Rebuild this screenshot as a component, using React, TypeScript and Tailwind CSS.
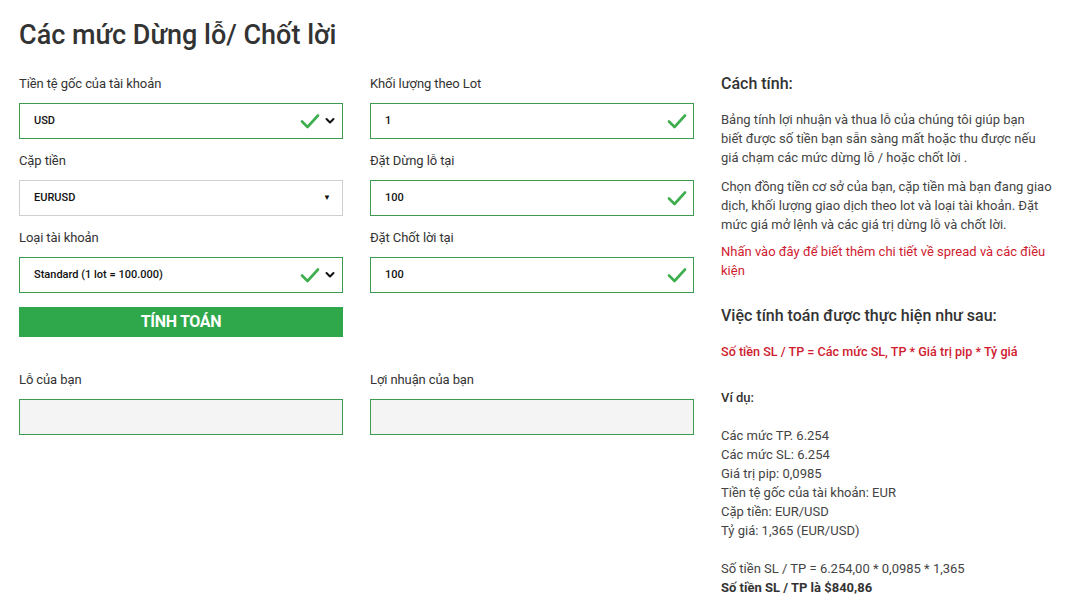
import type { ReactNode } from 'react'

const GREEN = 'border-[#3d9b50]'

function Check() {
  return (
    <svg width="20" height="16" viewBox="0 0 20 16" fill="none">
      <path d="M2 8.5 L7.5 14 L18 2.5" stroke="#3fae4f" strokeWidth="2.6" strokeLinecap="round" strokeLinejoin="round" />
    </svg>
  )
}

function Chevron() {
  return (
    <svg width="10" height="8" viewBox="0 0 10 8" fill="none">
      <path d="M1.5 2 L5 5.5 L8.5 2" stroke="#111" strokeWidth="2" strokeLinecap="round" strokeLinejoin="round" />
    </svg>
  )
}

function Field({ label, children }: { label: string; children: ReactNode }) {
  return (
    <div className="flex flex-col">
      <label className="h-[20px] text-[13px] leading-[20px] tracking-[-0.1px] text-[#333]">{label}</label>
      <div className="mt-[9px]">{children}</div>
    </div>
  )
}

function Box({ value, select, valid = true }: { value: string; select?: boolean; valid?: boolean }) {
  return (
    <div
      className={`flex h-[36px] items-center border pl-[14px] pr-[6px] text-[11px] font-medium text-[#111] ${
        valid ? GREEN : 'border-[#cfcfcf]'
      }`}
    >
      <span className="flex-1">{value}</span>
      {valid && <Check />}
      {select && valid && (
        <span className="ml-[4px] flex w-[12px] justify-center">
          <Chevron />
        </span>
      )}
      {!valid && <span className="mr-[5px] text-[8px] text-[#111]">▼</span>}
    </div>
  )
}

function Result({ label }: { label: string }) {
  return (
    <Field label={label}>
      <div className={`h-[36px] border ${GREEN} bg-[#f4f4f4]`} />
    </Field>
  )
}

export default function App() {
  return (
    <div className="min-h-[607px] bg-white pl-[19px] pt-[19px] font-['Roboto',sans-serif]">
      <h1 className="text-[27px] font-medium leading-[32px] text-[#333]">Các mức Dừng lỗ/ Chốt lời</h1>

      <div className="mt-[23px] flex items-start gap-[27px]">
        <div className="grid grid-cols-[324px_324px] content-start gap-x-[27px] gap-y-[12px]">
          <Field label="Tiền tệ gốc của tài khoản">
            <Box value="USD" select />
          </Field>
          <Field label="Khối lượng theo Lot">
            <Box value="1" />
          </Field>
          <Field label="Cặp tiền">
            <Box value="EURUSD" select valid={false} />
          </Field>
          <Field label="Đặt Dừng lỗ tại">
            <Box value="100" />
          </Field>
          <Field label="Loại tài khoản">
            <Box value="Standard (1 lot = 100.000)" select />
          </Field>
          <Field label="Đặt Chốt lời tại">
            <Box value="100" />
          </Field>

          <button className="mt-[2px] h-[30px] bg-[#2ea84a] text-[16px] font-bold tracking-[-0.3px] text-white">
            TÍNH TOÁN
          </button>
          <div />

          <div className="col-span-2 mt-[21px] grid grid-cols-[324px_324px] gap-x-[27px]">
            <Result label="Lỗ của bạn" />
            <Result label="Lợi nhuận của bạn" />
          </div>
        </div>

        <aside className="w-[332px] text-[13px] leading-[19px] text-[#444]">
          <h3 className="text-[16px] font-medium leading-[20px] text-[#333]">Cách tính:</h3>
          <p className="mt-[16px] w-[322px]">
            Bảng tính lợi nhuận và thua lỗ của chúng tôi giúp bạn biết được số tiền bạn sẵn sàng mất hoặc thu được nếu
            giá chạm các mức dừng lỗ / hoặc chốt lời .
          </p>
          <p className="mt-[10px]">
            Chọn đồng tiền cơ sở của bạn, cặp tiền mà bạn đang giao dịch, khối lượng giao dịch theo lot và loại tài
            khoản. Đặt mức giá mở lệnh và các giá trị dừng lỗ và chốt lời.
          </p>
          <a className="mt-[8px] block w-[325px] text-[#d0202f]">
            Nhấn vào đây để biết thêm chi tiết về spread và các điều kiện
          </a>

          <h3 className="mt-[25px] text-[16px] font-medium leading-[22px] text-[#333]">
            Việc tính toán được thực hiện như sau:
          </h3>
          <p className="mt-[15px] text-[12.6px] font-medium text-[#d0202f]">
            Số tiền SL / TP = Các mức SL, TP * Giá trị pip * Tỷ giá
          </p>

          <p className="mt-[27px] font-medium text-[#333]">Ví dụ:</p>
          <div className="mt-[19px]">
            <div>Các mức TP. 6.254</div>
            <div>Các mức SL: 6.254</div>
            <div>Giá trị pip: 0,0985</div>
            <div>Tiền tệ gốc của tài khoản: EUR</div>
            <div>Cặp tiền: EUR/USD</div>
            <div>Tỷ giá: 1,365 (EUR/USD)</div>
            <div className="h-[19px]" />
            <div>Số tiền SL / TP = 6.254,00 * 0,0985 * 1,365</div>
            <div className="font-bold text-[#333]">Số tiền SL / TP là $840,86</div>
          </div>
        </aside>
      </div>
    </div>
  )
}
